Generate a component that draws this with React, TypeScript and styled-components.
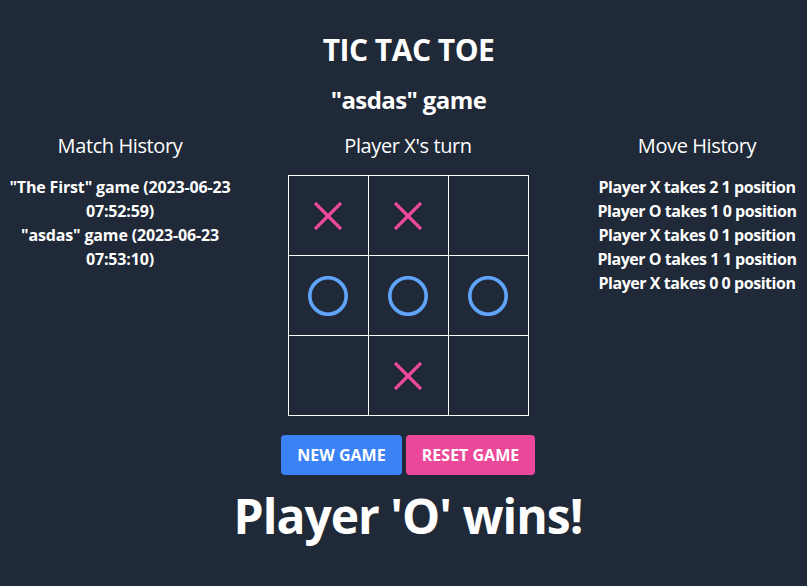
import React from "react";
import styled, { createGlobalStyle } from "styled-components";

const Global = createGlobalStyle`
  html, body { margin: 0; padding: 0; background: #1f2937; }
  body { font-family: "Open Sans", "Noto Sans", sans-serif; color: #ffffff; }
  * { box-sizing: border-box; }
`;

const Page = styled.div`
  width: 807px;
  height: 586px;
  background: #1f2937;
  display: flex;
  flex-direction: column;
  align-items: stretch;
  padding-top: 32px;
`;

const Header = styled.header`
  display: flex;
  flex-direction: column;
  align-items: center;
  padding-left: 10px;
`;

const Title = styled.h1`
  margin: 0;
  font-size: 30px;
  line-height: 36px;
  font-weight: 700;
  letter-spacing: -0.5px;
`;

const Subtitle = styled.h2`
  margin: 16px 0 0;
  font-size: 24px;
  line-height: 32px;
  font-weight: 700;
  letter-spacing: -0.6px;
`;

const Main = styled.main`
  display: grid;
  grid-template-columns: 240px 336px 1fr;
  margin-top: 16px;
`;

const Column = styled.section<{ $padLeft?: number }>`
  display: flex;
  flex-direction: column;
  align-items: center;
  padding-left: ${(p) => p.$padLeft ?? 0}px;
`;

const ColumnTitle = styled.h3`
  margin: 0 0 15px;
  font-size: 20px;
  line-height: 28px;
  font-weight: 400;
  letter-spacing: -0.4px;
`;

const List = styled.ul`
  list-style: none;
  margin: 0;
  padding: 0;
  text-align: center;
`;

const Item = styled.li<{ $tight?: boolean }>`
  font-size: 16px;
  line-height: 24px;
  font-weight: 700;
  letter-spacing: ${(p) => (p.$tight ? "-0.45px" : "-0.15px")};
`;

const Board = styled.div`
  display: grid;
  grid-template-columns: repeat(3, 79px);
  grid-template-rows: repeat(3, 79px);
  gap: 1px;
  padding: 1px;
  background: #ffffff;
`;

const Cell = styled.button`
  border: none;
  padding: 0;
  margin: 0;
  background: #1f2937;
  display: flex;
  align-items: center;
  justify-content: center;
`;

const Buttons = styled.div`
  display: flex;
  gap: 4px;
  margin-top: 19px;
`;

const Button = styled.button<{ $color: string; $w: number }>`
  height: 40px;
  width: ${(p) => p.$w}px;
  border: none;
  border-radius: 4px;
  background: ${(p) => p.$color};
  color: #ffffff;
  font-family: "Open Sans", "Noto Sans", sans-serif;
  font-size: 16px;
  font-weight: 700;
  letter-spacing: 0;
  text-transform: uppercase;
`;

const Winner = styled.div`
  margin-top: 11px;
  font-size: 48px;
  line-height: 60px;
  font-weight: 700;
  letter-spacing: -1px;
  white-space: nowrap;
`;

const XMark = () => (
  <svg width="30" height="30" viewBox="0 0 30 30">
    <line x1="2" y1="2" x2="28" y2="28" stroke="#ec4899" strokeWidth="3.2" />
    <line x1="28" y1="2" x2="2" y2="28" stroke="#ec4899" strokeWidth="3.2" />
  </svg>
);

const OMark = () => (
  <svg width="42" height="42" viewBox="0 0 42 42">
    <circle cx="21" cy="21" r="18.2" fill="none" stroke="#60a5fa" strokeWidth="3.6" />
  </svg>
);

const board = ["X", "X", "", "O", "O", "O", "", "X", ""];

const matches = [
  '"The First" game (2023-06-23 07:52:59)',
  '"asdas" game (2023-06-23 07:53:10)',
];

const moves = [
  "Player X takes 2 1 position",
  "Player O takes 1 0 position",
  "Player X takes 0 1 position",
  "Player O takes 1 1 position",
  "Player X takes 0 0 position",
];

export default function App() {
  return (
    <Page>
      <Global />
      <Header>
        <Title>TIC TAC TOE</Title>
        <Subtitle>"asdas" game</Subtitle>
      </Header>
      <Main>
        <Column>
          <ColumnTitle>Match History</ColumnTitle>
          <List>
            {matches.map((m) => (
              <Item key={m}>{m}</Item>
            ))}
          </List>
        </Column>
        <Column>
          <ColumnTitle>Player X's turn</ColumnTitle>
          <Board>
            {board.map((v, i) => (
              <Cell key={i}>{v === "X" ? <XMark /> : v === "O" ? <OMark /> : null}</Cell>
            ))}
          </Board>
          <Buttons>
            <Button $color="#3b82f6" $w={121}>New Game</Button>
            <Button $color="#ec4899" $w={129}>Reset Game</Button>
          </Buttons>
          <Winner>Player 'O' wins!</Winner>
        </Column>
        <Column $padLeft={11}>
          <ColumnTitle>Move History</ColumnTitle>
          <List>
            {moves.map((m) => (
              <Item key={m} $tight>
                {m}
              </Item>
            ))}
          </List>
        </Column>
      </Main>
    </Page>
  );
}
